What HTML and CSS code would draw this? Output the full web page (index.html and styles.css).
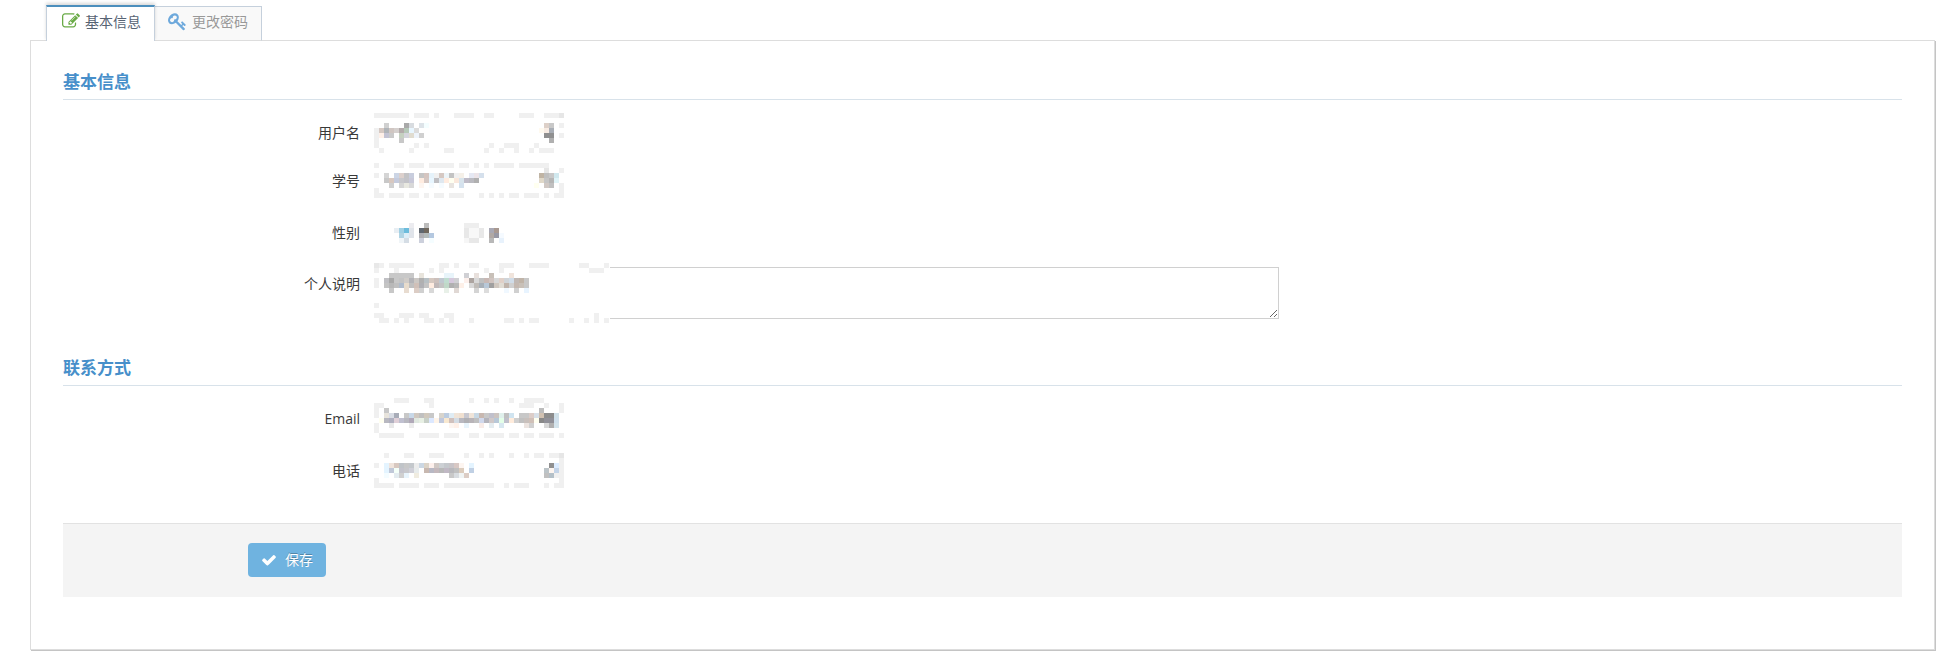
FILE: index.html
```html
<!DOCTYPE html>
<html lang="zh-CN">
<head>
<meta charset="utf-8">
<title>基本信息</title>
<link rel="stylesheet" href="styles.css">
</head>
<body>
<ul class="tabs">
  <li class="tab active"><svg class="icon edit" viewBox="0 0 1792 1792"><path d="M888 1184l116-116-152-152-116 116v56h96v96h56zm440-720q-16-16-33 1l-350 350q-17 17-1 33t33-1l350-350q17-17 1-33zm80 594v190q0 119-84.500 203.500t-203.500 84.500h-832q-119 0-203.500-84.500t-84.500-203.500v-832q0-119 84.500-203.500t203.500-84.500h832q63 0 117 25 15 7 18 23 3 17-9 29l-49 49q-14 14-32 8-23-6-45-6h-832q-66 0-113 47t-47 113v832q0 66 47 113t113 47h832q66 0 113-47t47-113v-126q0-13 9-22l64-64q15-15 35-7t20 29zm-96-738l288 288-672 672h-288v-288zm444 132l-92 92-288-288 92-92q28-28 68-28t68 28l152 152q28 28 28 68t-28 68z"/></svg><span>基本信息</span></li>
  <li class="tab"><svg class="icon key" viewBox="0 0 1792 1792"><path d="M832 512q0-80-56-136t-136-56-136 56-56 136q0 42 19 83-41-19-83-19-80 0-136 56t-56 136 56 136 136 56 136-56 56-136q0-42-19-83 41 19 83 19 80 0 136-56t56-136zm851 704q0 17-49 66t-66 49q-9 0-28.500-16t-36.500-33-38.500-40-24.500-26l-96 96 220 220q28 28 28 68 0 42-39 81t-81 39q-40 0-68-28l-671-671q-176 131-365 131-163 0-265.500-102.500t-102.500-265.500q0-160 95-313t248-248 313-95q163 0 265.500 102.500t102.500 265.500q0 189-131 365l355 355 96-96q-3-3-26-24.500t-40-38.500-33-36.500-16-28.500q0-17 49-66t66-49q13 0 23 10 6 6 46 44.500t82 79.500 86.500 86 73 78 28.500 41z"/></svg><span>更改密码</span></li>
</ul>
<main class="panel">
  <h4 class="heading">基本信息</h4>
  <div class="row username"><label>用户名</label><svg class="mosaic" data-block="username"></svg></div>
  <div class="row number"><label>学号</label><svg class="mosaic" data-block="number"></svg></div>
  <div class="row gender"><label>性别</label><svg class="mosaic" data-block="gender"></svg></div>
  <div class="row about"><label>个人说明</label><div class="field"><textarea class="note"></textarea><svg class="mosaic cover" data-block="about"></svg></div></div>
  <h4 class="heading contact">联系方式</h4>
  <div class="row email"><label>Email</label><svg class="mosaic" data-block="email"></svg></div>
  <div class="row phone"><label>电话</label><svg class="mosaic" data-block="phone"></svg></div>
  <div class="actions">
    <button class="save" type="button"><svg class="icon check" viewBox="0 0 1792 1792"><path d="M1671 566q0 40-28 68l-724 724-136 136q-28 28-68 28t-68-28l-136-136-362-362q-28-28-28-68t28-68l136-136q28-28 68-28t68 28l294 295 656-657q28-28 68-28t68 28l136 136q28 28 28 68z"/></svg><span>保存</span></button>
  </div>
</main>
<script src="mosaic.js"></script>
</body>
</html>
```

FILE: styles.css
```css
* { box-sizing: border-box; }
body {
  margin: 0;
  padding: 5px 22px 0 30px;
  height: 651px;
  overflow: hidden;
  background: #fff;
  color: #393939;
  font: 14px/20px "Open Sans", "Noto Sans CJK SC", sans-serif;
}
.tabs {
  display: flex;
  align-items: flex-end;
  height: 36px;
  margin: 0 0 -1px;
  padding: 0 0 0 16px;
  list-style: none;
  position: relative;
}
.tab {
  display: flex;
  align-items: center;
  width: 107px;
  height: 35px;
  padding: 0 0 5px 13px;
  border: 1px solid #c5d0dc;
  border-left: 0;
  background: #f9f9f9;
  color: #999;
  white-space: nowrap;
}
.tab span { position: relative; top: 1px; }
.tab.active {
  width: 109px;
  height: 36px;
  padding: 0 0 6px 15px;
  border-left: 1px solid #c5d0dc;
  border-top: 2px solid #4c8fbd;
  border-bottom: 0;
  background: #fff;
  color: #576373;
  box-shadow: 0 -2px 3px rgba(0, 0, 0, .15);
  clip-path: inset(-5px -3px 0 -3px);
}
.tab:not(.active) { border-bottom-color: #ddd; }
.icon { flex: none; fill: currentColor; }
.edit { width: 18px; height: 18px; margin-right: 5px; color: #69aa46; }
.key { width: 19px; height: 19px; margin-right: 5px; color: #6ea9dc; }
.panel {
  height: 610px;
  padding: 23px 32px 0;
  border: 1px solid #ddd;
  box-shadow: 1px 1px 0 #c4c4c4;
}
.heading {
  height: 36px;
  margin: 0 0 13px;
  border-bottom: 1px solid #d8e2ea;
  color: #478fca;
  font-size: 17px;
  font-weight: 700;
  line-height: 36px;
}
.contact { margin: 27px 0 12px; }
.row { display: flex; align-items: flex-start; }
.row label { width: 297px; margin-right: 14px; text-align: right; line-height: 20px; }
.username { height: 50px; }
.username label { padding-top: 10px; }
.number { height: 60px; }
.number label { padding-top: 8px; }
.gender { height: 40px; }
.about { height: 60px; }
.about label { padding-top: 11px; }
.email { height: 55px; }
.email label { padding-top: 11px; }
.phone { height: 70px; }
.phone label { padding-top: 8px; }
.mosaic { display: block; flex: none; shape-rendering: crispEdges; }
.field { position: relative; width: 905px; height: 60px; padding-top: 4px; }
.note {
  display: block;
  width: 905px;
  height: 52px;
  margin: 0;
  padding: 4px;
  border: 1px solid #d0d0d0;
  outline: 0;
}
.cover { position: absolute; left: 0; top: 0; background: #fff; }
.actions {
  height: 74px;
  padding: 19px 0 0 185px;
  border-top: 1px solid #e2e2e2;
  background: #f4f4f4;
}
.save {
  display: flex;
  align-items: center;
  width: 78px;
  height: 34px;
  padding: 0 0 0 13px;
  border: 0;
  border-radius: 4px;
  background: #6fb3e0;
  color: #fff;
  font: inherit;
  text-shadow: 0 -1px 0 rgba(0, 0, 0, .25);
}
.check { width: 16px; height: 16px; margin-right: 8px; }
```

FILE: mosaic.js
```js
// Each block lists its rows; a cell is "column[:length][=colour]".
const CELL = 5;
const blocks = {
  username: { cols: 38, rows: [
    '0:7 8:3 12 16:4 22:2 29:3 34:3 37=e6e6e6', '',
    '2=d0d0d0 6=a9a9a9 7=d8dce0 9=dde3e8 10=f4feff 34=ddd0c8 35=c8c8c8 37',
    '0 1=d6c9c3 2=b0b4b8 3=d0c6c2 4=d5d0ce 5=b3abab 6=b6c8b8 7=e8f6ff 8=dcdcdc 33=fffaf0 34=f8ece4 35=a8adb5',
    '0 1=fff0e8 2=c3c3d3 3=cacaca 5=c5d0c0 6=d5d5dd 7=e0dcd0 8=eef4fb 9=d0d0d0 34:2=909090 37',
    '0 5=c8c8c8 35=b0b0b0', '0 8 10 23 26:3 32', '1 7 14:2 22 25 28 31 33:3'] },
  number: { cols: 38, rows: [
    '0 4:2 7:3 11:5 17:2 20 22 24:4 29:6', '34=e6e6e6 37',
    '0 2=d5d5d5 4=ccd5e5 5=dcd0cc 6=c3c3c5 7=c8cddd 9=c5c5c5 10=d5c5c0 11=e5f2fa 12 13=d5c8c2 14=ecf4f8 15=c3c3c3 16 17=f5f0e8 19=e5e8f3 20=ece4e8 21=d5e0ec 33=c0b4a4 34=bfbfbf 35=c8c8c8 36=d0e8ee',
    '2=c8c8c8 3=d8c8c0 4=c5cbdd 5=c8c8cc 6=c3c3c8 7=c8c8d8 9=ffece0 10=d5c8c4 11=e8f6ff 12=c0c0c4 13=dfe8f0 14=ffece0 15=fffff0 16=fae8dc 17=d8e4ec 18=c0bcc8 19=babac0 20=b0b0b0 33=e0d8c8 34=c5c5c5 35=b5b5b5 36=e0f4f8',
    '3=d0d0d0 5=d5d5d5 6=e8e8e0 7=d8d8d8 9=fdf5f0 11=f5fbff 13=f5fbff 15=e8e4e0 17=d5e2ee 32=fffff0 34=d0c8c4 35=c0c0c0 37',
    '0 37', '0:2 3:3 7:2 10 12:2 15:3 21 23 25 27:2 30:3 34 36:2'] },
  gender: { cols: 38, rows: [
    '7=ececf0 10=bcbcbc 18:3=eeeeee',
    '4=e8eef3 5=a0d0e4 6=6cbcdc 7=e0e4ea 9=606870 10=70685e 18=e8e8e8 19:2=f8f8f8 21=e8e8e8 23=a8a8b4 24=a89890',
    '5=b0d4e4 6=dceef8 7=e0e4ea 9=b0b0b4 10=b4bcbc 11=b4c8e0 18=e8e8e8 19:2=f8f8f8 21=e8e8e8 23=b0a8a4 24=9898a4 25=f5faff',
    '5=f0f5f8 6=d5dde5 9=ccd0dc 11=f5fdff 18=f6f6f6 19:2=e8e8e8 23=b8b8b8 25=e8f2fc'] },
  about: { cols: 47.2, rows: [
    '0=e8e8e8 1 3:5 13:2 16 19:2 25:3 31:4 41:2 46', '0 4 11 13 22 25 43:3',
    '3:5=c8c8c8 9=e8e4dc 14:2=e8f4fa 18=d0d0d4 20=e8e0dc 23=c8c0b8 27=f0e4dc',
    '0 2=c0c0c4 3=a8a8a8 4=c8c8c8 5=c4c4c4 6=d0ccc8 7=b4b4b8 8=ccc8c4 9=b0b0b0 10=b8c0c4 11=d5c8c0 12=ccc0bc 13=c0c8d0 14=c0dcd0 15=d5c8dc 16=d0d0d4 18=fdf0ec 19=aca4a0 20=d8d8d8 21=c0c0c0 22=c8b8b4 23=d0c4c0 24=d8d8d8 25=e0d0c8 26=d0d4d8 27=d0dce8 28=c0b8b4 29=c0b4a8 30=c8c8c8',
    '0 2=c4c4c4 3=b8b8b8 4=c0c0c0 5=b0bccc 6=e8dccc 7=c0c0c0 8=d0c0b8 9=b0b0b4 10=c4c4c4 11=ffece0 12=c0b8b8 13=c4c4c4 14=c0d8c8 15=b0b0b0 16=b8b8b8 17=fdf0e8 19=d8d8d8 20=c0bcb8 21=a8b0b8 22=b8c8d8 23=a0a0a0 24=d0c8c0 25=e0dcd4 26=c0b4ac 27=d0d0d0 28=c4b8b0 29=c8c0b8 30=c8c8c8',
    '3=c8c8c8 6=e8dcd0 8=dccdc5 9=d0d0d0 11=d8d8d8 14=e8f0e8 16=e0d8d4 20=d4d4d4 22=dcdcdc 26=f0f8ff 28=d0d0d0 30=e8f4ff',
    '', '', '0', '', '0:2 5:3 9:2 14:2 44', '1:2 4 6 10:2 13 15 19 26:2 29 31:2 39 42 44 46'] },
  email: { cols: 38, rows: [
    '4:3 10:2 19 22 24 27 30:4', '0:2 11 29:3 34 37', '0 2=c8c8c8 33=bcbcbc 37',
    '0 2=e8e4dc 3=d8dce4 4=a8acb8 6=c8c8c8 7=c8d8e8 8=d0c8c0 9=c0c0c0 10=d0c8bc 11=c8c8c8 13=d8d4cc 14=bccce0 15=dfecf4 16=f0e4d8 17=f0e0d0 18=c8c8d0 19=f0e4d8 20=c8d8e4 21=c8b8b0 22=c8c8c8 23=c0c0cc 24=ccc4c0 25=e0f0ec 26=c0c0c0 27=d0e4f0 29=c8c8c8 30=c8c8c8 31=dccdc8 32=d8e0e8 33=d0c0b0 34:2=8c8c8c 36=d0e0e8',
    '1=fffff0 2=b8b8c0 3=b0b0c0 4=e0d0d8 5=c0c0d0 6=b8b8c0 7=b0a8b8 8=e0e8e0 9=e8f0e4 10=c8d0c8 11=dce8ff 12=fff4e8 13=c0c8dc 14=f8e8d0 15=d0c0bc 16=d4dce4 17=b8b8c0 18=b0b0b4 19=b8b4b8 20=c0c0c0 21=d0d8ec 22=b4b4bc 23=d0c8c8 24=b8c8d8 25=e4ffe8 26=c0c0cc 27=ffecdc 28=d0d0d0 29=c0c0c0 30=c8c0bc 31=d0c0b8 32=fffff0 33=888888 34:2=909098 36=d0e0ec',
    '0 3=e8e8e8 7=ececec 15=fdf5f0 16=fff0e8 18=e8f4fc 21=f8ece8 23=e4ecf0 25=d8e8f0 30=ece4e0 31=d0d0d0 34=d8d8d8 35=b0b0b0 36=d4e4ec',
    '0', '1:5 9:4 14:3 19:2 22:4 27:2 30:2 33:2 35 37'] },
  phone: { cols: 38, rows: [
    '2 6:2 11:3 18 21 23 27 30 32:2 35:2 37=e6e6e6', '37',
    '0 2=e4f4ff 3=f0e4dc 4=d8c8c0 5=c0c4c8 6=c8c8c8 7=c4c8cc 8=ececec 9=ccd8e4 10=dcd4c8 11=fdf0ec 12=d0c8c4 13=ccd0d4 14=c4c8cc 15=c8c4c8 16=d8c8c4 17=fdf5f0 19=e4f4ff 35=909090 36=dcecff 37',
    '2=e4f4ff 3=c0c8d8 4=f4fff8 5=c4c4cc 6=c8c8cc 7=d0d0d8 8=e8ecec 10=c8b8b0 11=b8b8c4 12=c4b8bc 13=b8b8b8 14=c0b8c4 15=b8b8bc 16=c0c0c0 17=dcccbc 19=c0d0e4 34=bcc4c8 35=fdf5f0 36=c4d4e8 37',
    '2=f4fcff 4=e4ecf0 5=d0d0d0 6=e8f4fc 8=f0ece0 15=c8c8c8 16=d8dce0 17=f0f4f4 18=dccdc5 34=c0c0c0 35=b4c0c8 36=f0f0f0 37',
    '0 37', '0:4 5:4 10:3 14:10 26 28:3 34 36:2'] }
};
const NS = 'http://www.w3.org/2000/svg';
for (const svg of document.querySelectorAll('.mosaic')) {
  const block = blocks[svg.dataset.block];
  svg.setAttribute('width', block.cols * CELL);
  svg.setAttribute('height', block.rows.length * CELL);
  block.rows.forEach((row, y) => {
    for (const token of row.split(' ').filter(Boolean)) {
      const [place, colour = 'f0f0f0'] = token.split('=');
      const [col, length = 1] = place.split(':').map(Number);
      const rect = document.createElementNS(NS, 'rect');
      rect.setAttribute('x', col * CELL);
      rect.setAttribute('y', y * CELL);
      rect.setAttribute('width', length * CELL);
      rect.setAttribute('height', CELL);
      rect.setAttribute('fill', '#' + colour);
      svg.append(rect);
    }
  });
}
```
